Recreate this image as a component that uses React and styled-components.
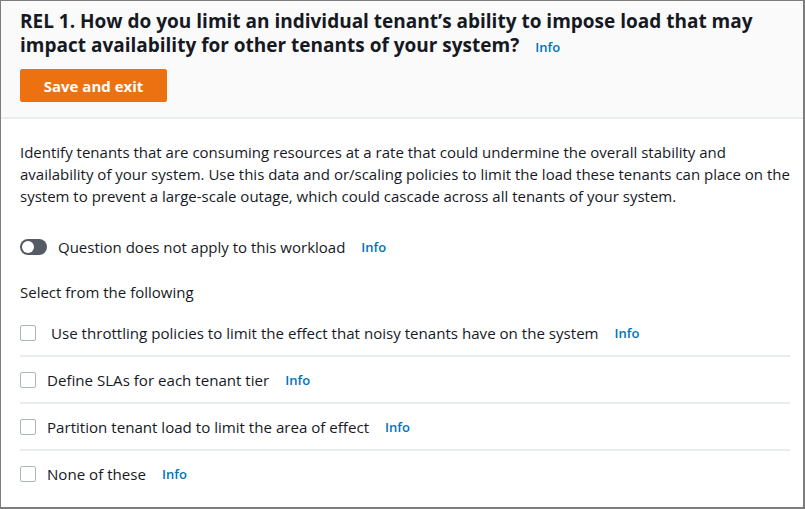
import React from "react";
import styled, { createGlobalStyle } from "styled-components";

const Global = createGlobalStyle`
  html, body { margin: 0; padding: 0; background: #fff; }
  body { font-family: "Open Sans", "Noto Sans", Arial, sans-serif; color: #16191f; }
`;

const Frame = styled.div`
  width: 805px;
  height: 509px;
  box-sizing: border-box;
  border: 1px solid #7d7d7d;
  border-right-width: 2px;
  border-bottom-width: 2px;
  display: flex;
  flex-direction: column;
  overflow: hidden;
`;

const Header = styled.div`
  background: #fafafa;
  border-bottom: 2px solid #eaeded;
  padding: 8px 20px 15px 19px;
  display: flex;
  flex-direction: column;
  align-items: flex-start;
  gap: 10px;
`;

const Title = styled.h1`
  margin: 0;
  font-size: 19px;
  line-height: 24px;
  font-weight: 700;
  color: #16191f;
  letter-spacing: 0;
`;

const InfoLink = styled.a`
  color: #0073bb;
  font-size: 13px;
  font-weight: 600;
  text-decoration: none;
  margin-left: ${(p) => p.$gap || 16}px;
  cursor: pointer;
`;

const PrimaryButton = styled.button`
  background: #ec7211;
  border: 1px solid #ec7211;
  border-radius: 2px;
  color: #fff;
  font-family: inherit;
  font-weight: 700;
  font-size: 15px;
  height: 33px;
  width: 147px;
  padding: 0;
  cursor: pointer;
`;

const Body = styled.div`
  padding: 22px 13px 0 19px;
  display: flex;
  flex-direction: column;
`;

const Description = styled.p`
  margin: 0;
  font-size: 15px;
  line-height: 22px;
  color: #16191f;
`;

const ToggleRow = styled.label`
  display: flex;
  align-items: center;
  margin-top: 29px;
  font-size: 15px;
  line-height: 22px;
`;

const Toggle = styled.span`
  width: 27px;
  height: 16px;
  border-radius: 8px;
  background: #545b64;
  position: relative;
  margin-right: 11px;
  flex: none;
  &::after {
    content: "";
    position: absolute;
    left: 2px;
    top: 2px;
    width: 12px;
    height: 12px;
    border-radius: 50%;
    background: #fff;
  }
`;

const SectionLabel = styled.div`
  margin-top: 23px;
  font-size: 15px;
  line-height: 22px;
`;

const List = styled.div`
  margin-top: 7px;
  display: flex;
  flex-direction: column;
`;

const Row = styled.label`
  display: flex;
  align-items: center;
  height: 45px;
  font-size: 15.1px;
  border-bottom: ${(p) => (p.$last ? "none" : "2px solid #eaeded")};
`;

const Box = styled.span`
  width: 14px;
  height: 14px;
  border: 1px solid #aab7b8;
  border-radius: 2px;
  margin-right: ${(p) => (p.$wide ? 15 : 11)}px;
  flex: none;
  background: #fff;
`;

const options = [
  { text: "Use throttling policies to limit the effect that noisy tenants have on the system", wide: true },
  { text: "Define SLAs for each tenant tier" },
  { text: "Partition tenant load to limit the area of effect" },
  { text: "None of these" },
];

export default function App() {
  return (
    <>
      <Global />
      <Frame>
        <Header>
          <Title>
            REL 1. How do you limit an individual tenant’s ability to impose load that may
            impact availability for other tenants of your system?
            <InfoLink $gap={16}>Info</InfoLink>
          </Title>
          <PrimaryButton>Save and exit</PrimaryButton>
        </Header>
        <Body>
          <Description>
            Identify tenants that are consuming resources at a rate that could undermine the overall stability and
            availability of your system. Use this data and or/scaling policies to limit the load these tenants can place on
            the system to prevent a large-scale outage, which could cascade across all tenants of your system.
          </Description>
          <ToggleRow>
            <Toggle />
            Question does not apply to this workload
            <InfoLink>Info</InfoLink>
          </ToggleRow>
          <SectionLabel>Select from the following</SectionLabel>
          <List>
            {options.map((o, i) => (
              <Row key={o.text} $last={i === options.length - 1}>
                <Box $wide={o.wide} />
                {o.text}
                <InfoLink>Info</InfoLink>
              </Row>
            ))}
          </List>
        </Body>
      </Frame>
    </>
  );
}
